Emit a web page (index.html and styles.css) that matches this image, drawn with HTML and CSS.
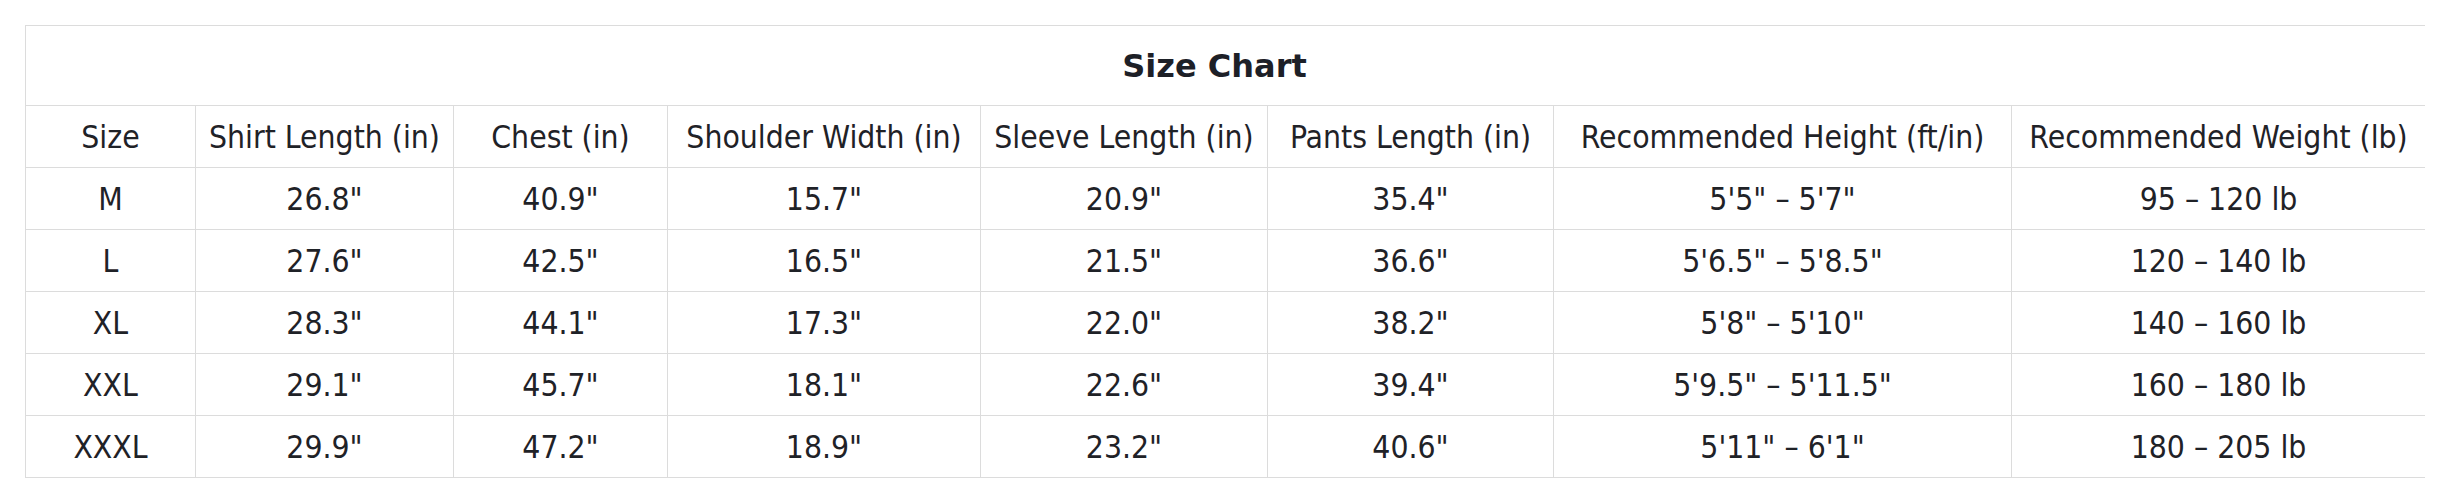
FILE: index.html
```html
<!DOCTYPE html>
<html lang="en">
<head>
<meta charset="utf-8">
<title>Size Chart</title>
<link rel="stylesheet" href="styles.css">
</head>
<body>
<table class="chart">
  <colgroup>
    <col class="c-size">
    <col class="c-shirt">
    <col class="c-chest">
    <col class="c-shoulder">
    <col class="c-sleeve">
    <col class="c-pants">
    <col class="c-height">
    <col class="c-weight">
  </colgroup>
  <thead>
    <tr class="title-row"><th colspan="8" class="title">Size Chart</th></tr>
    <tr class="head-row">
      <th>Size</th>
      <th>Shirt Length (in)</th>
      <th>Chest (in)</th>
      <th>Shoulder Width (in)</th>
      <th>Sleeve Length (in)</th>
      <th>Pants Length (in)</th>
      <th>Recommended Height (ft/in)</th>
      <th>Recommended Weight (lb)</th>
    </tr>
  </thead>
  <tbody>
    <tr><td>M</td><td>26.8"</td><td>40.9"</td><td>15.7"</td><td>20.9"</td><td>35.4"</td><td>5'5" – 5'7"</td><td>95 – 120 lb</td></tr>
    <tr><td>L</td><td>27.6"</td><td>42.5"</td><td>16.5"</td><td>21.5"</td><td>36.6"</td><td>5'6.5" – 5'8.5"</td><td>120 – 140 lb</td></tr>
    <tr><td>XL</td><td>28.3"</td><td>44.1"</td><td>17.3"</td><td>22.0"</td><td>38.2"</td><td>5'8" – 5'10"</td><td>140 – 160 lb</td></tr>
    <tr><td>XXL</td><td>29.1"</td><td>45.7"</td><td>18.1"</td><td>22.6"</td><td>39.4"</td><td>5'9.5" – 5'11.5"</td><td>160 – 180 lb</td></tr>
    <tr><td>XXXL</td><td>29.9"</td><td>47.2"</td><td>18.9"</td><td>23.2"</td><td>40.6"</td><td>5'11" – 6'1"</td><td>180 – 205 lb</td></tr>
  </tbody>
</table>
</body>
</html>
```
FILE: styles.css
```css
html, body {
  background: #ffffff;
}
body {
  margin: 25px;
  font-family: "DejaVu Sans Condensed", "DejaVu Sans", sans-serif;
  color: #1f2227;
}
.chart {
  width: 2400px;
  table-layout: fixed;
  border-collapse: collapse;
}
.c-size { width: 170px; }
.c-shirt { width: 258px; }
.c-chest { width: 214px; }
.c-shoulder { width: 313px; }
.c-sleeve { width: 287px; }
.c-pants { width: 286px; }
.c-height { width: 458px; }
.c-weight { width: 414px; }
.chart th,
.chart td {
  border: 1px solid #dcdcdc;
  padding: 0;
  text-align: center;
  vertical-align: middle;
  font-size: 31.6px;
  font-weight: normal;
  white-space: nowrap;
}
.title-row { height: 80px; }
.head-row { height: 62px; }
.chart tbody tr { height: 62px; }
.chart th.title {
  font-family: "DejaVu Sans", sans-serif;
  font-weight: bold;
  font-size: 32px;
  padding-right: 22px;
  color: #1d2027;
}
```
